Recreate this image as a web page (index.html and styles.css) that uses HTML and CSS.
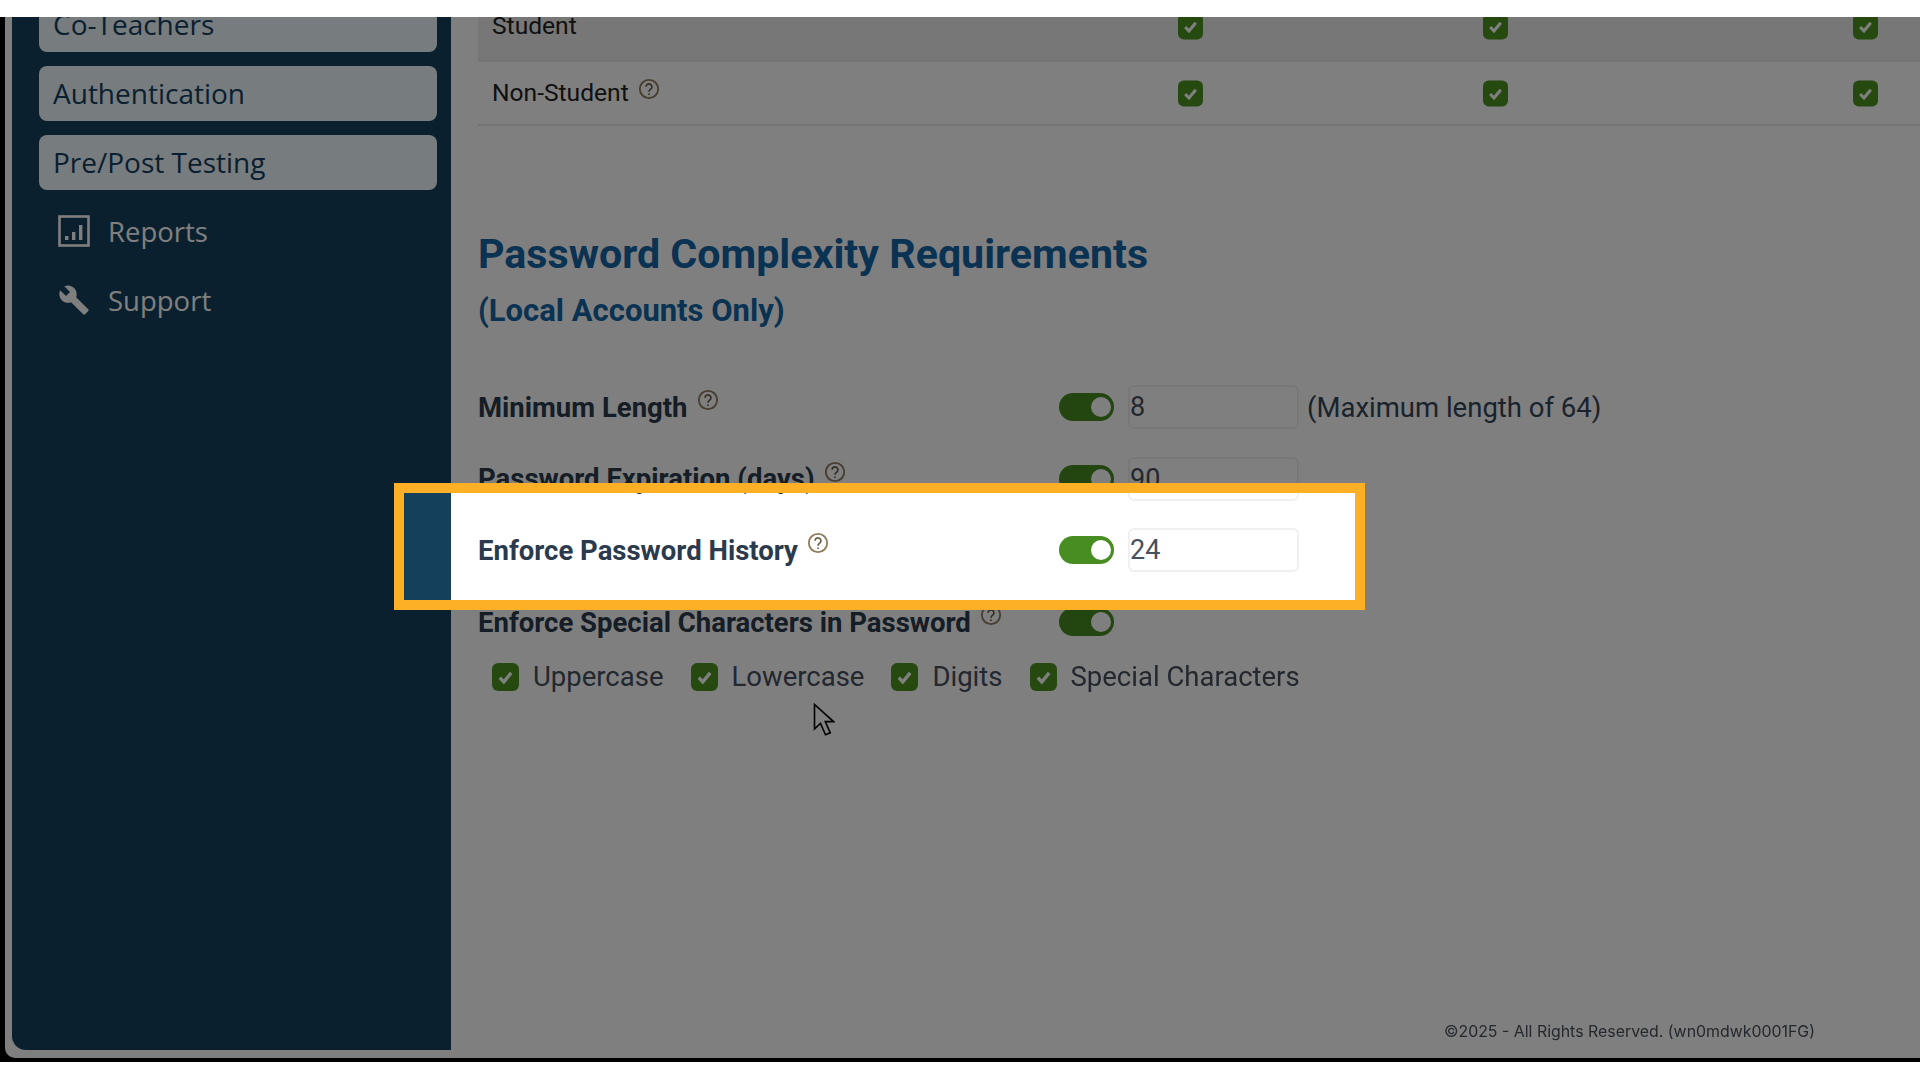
FILE: index.html
```html
<!DOCTYPE html>
<html lang="en">
<head>
<meta charset="utf-8">
<title>Password Complexity Requirements</title>
<link rel="stylesheet" href="styles.css">
</head>
<body>
<svg class="defs" width="0" height="0" aria-hidden="true">
  <symbol id="help" viewBox="0 0 24 24">
    <circle cx="12" cy="12" r="10" fill="none" stroke="#8d7d5e" stroke-width="2"/>
    <path d="M8.8 9.6a3.2 3.2 0 1 1 5 2.6c-1.2.8-1.8 1.4-1.8 2.8M12 17v1.6" fill="none" stroke="#6a5c42" stroke-width="1.8"/>
  </symbol>
  <symbol id="check" viewBox="0 0 26 27">
    <rect width="26" height="27" rx="6" fill="#4a931f"/>
    <path d="M7.5 14l3.9 4.2L18.5 9.5" fill="none" stroke="#fff" stroke-width="3.2"/>
  </symbol>
</svg>
<div class="stage">
  <div class="app">
    <aside class="sidebar">
      <nav class="nav">
        <a class="sub">Co-Teachers</a>
        <a class="sub">Authentication</a>
        <a class="sub">Pre/Post Testing</a>
        <a class="top">
          <svg class="top-icon" viewBox="0 0 32 32"><rect x="1.5" y="1.5" width="29" height="29" fill="none" stroke="#fff" stroke-width="2.6"/><path d="M7 21h3.4v4H7zM14 17h3.4v8H14zM21 10h3.4v15H21z" fill="#fff"/></svg>
          Reports
        </a>
        <a class="top">
          <svg class="top-icon" viewBox="0 0 24 24"><path d="M22.7 19l-9.1-9.1c.9-2.3.4-5-1.5-6.9-2-2-5-2.4-7.4-1.3L9 6 6 9 1.6 4.7C.4 7.1.9 10.1 2.9 12.1c1.9 1.9 4.6 2.4 6.9 1.5l9.1 9.1c.4.4 1 .4 1.4 0l2.3-2.3c.5-.4.5-1.1.1-1.4z" fill="#fff"/></svg>
          Support
        </a>
      </nav>
    </aside>
    <main class="main">
      <div class="table">
        <div class="t-row t-row-student">
          <span class="t-label">Student</span>
          <svg class="cb"><use href="#check"/></svg>
          <svg class="cb"><use href="#check"/></svg>
          <svg class="cb"><use href="#check"/></svg>
        </div>
        <div class="t-row">
          <span class="t-label">Non-Student <svg class="help help-small"><use href="#help"/></svg></span>
          <svg class="cb"><use href="#check"/></svg>
          <svg class="cb"><use href="#check"/></svg>
          <svg class="cb"><use href="#check"/></svg>
        </div>
      </div>
      <h2 class="title">Password Complexity Requirements</h2>
      <h3 class="subtitle">(Local Accounts Only)</h3>
      <div class="settings">
        <div class="setting">
          <span class="s-label">Minimum Length <svg class="help"><use href="#help"/></svg></span>
          <span class="toggle"><i class="knob"></i></span>
          <div class="field">8</div>
          <span class="note">(Maximum length of 64)</span>
        </div>
        <div class="setting">
          <span class="s-label">Password Expiration (days) <svg class="help"><use href="#help"/></svg></span>
          <span class="toggle"><i class="knob"></i></span>
          <div class="field">90</div>
        </div>
        <div class="setting">
          <span class="s-label">Enforce Password History <svg class="help"><use href="#help"/></svg></span>
          <span class="toggle"><i class="knob"></i></span>
          <div class="field">24</div>
        </div>
        <div class="setting">
          <span class="s-label">Enforce Special Characters in Password <svg class="help"><use href="#help"/></svg></span>
          <span class="toggle"><i class="knob"></i></span>
        </div>
      </div>
      <div class="options">
        <label class="option"><svg class="cb cb-large"><use href="#check"/></svg>Uppercase</label>
        <label class="option"><svg class="cb cb-large"><use href="#check"/></svg>Lowercase</label>
        <label class="option"><svg class="cb cb-large"><use href="#check"/></svg>Digits</label>
        <label class="option"><svg class="cb cb-large"><use href="#check"/></svg>Special Characters</label>
      </div>
      <footer class="footer">©2025 - All Rights Reserved. (wn0mdwk0001FG)</footer>
    </main>
    <svg class="cursor" viewBox="0 0 22 33"><path d="M1.5 1.5V26l6-5.6 5 11.4 4.8-2-5-11.2h8.2z" fill="#fff" stroke="#000" stroke-width="1.6"/></svg>
  </div>
  <div class="spotlight"></div>
</div>
</body>
</html>
```
FILE: styles.css
```css
* { box-sizing: border-box; }
html, body { margin: 0; background: #fff; }
body { font-family: Roboto, "Liberation Sans", sans-serif; height: 1080px; overflow: hidden; padding-top: 17px; }
.defs { position: absolute; }

.stage {
  position: relative;
  height: 1045px;
  overflow: hidden;
  background: #000;
  padding: 0 0 4px 5px;
}
.app {
  position: relative;
  display: flex;
  height: 100%;
  background: #fff;
  border-bottom-left-radius: 10px;
  filter: blur(0.7px);
}

.sidebar {
  flex: 0 0 439px;
  margin: 0 0 8px 7px;
  background: #14405c;
  border-bottom-left-radius: 14px;
  overflow: hidden;
}
.nav {
  display: flex;
  flex-direction: column;
  gap: 14px;
  margin-top: -20px;
  padding: 0 14px 0 27px;
  font-family: "Open Sans", sans-serif;
  font-size: 28px;
}
.nav a { display: flex; align-items: center; height: 55px; padding-bottom: 1px; }
.sub {
  background: #eff8fe;
  border-radius: 8px;
  padding-left: 14px;
  color: #143f5e;
}
.top { color: #fff; padding-left: 19px; gap: 18px; font-weight: 500; font-size: 27.5px; }
.top-icon { width: 32px; height: 32px; flex: none; }

.main {
  flex: 1;
  min-width: 0;
  display: flex;
  flex-direction: column;
  padding-left: 27px;
  color: #2b3a4c;
}
.table { margin-top: -24px; }
.t-row {
  display: grid;
  grid-template-columns: 700px 305px 370px 1fr;
  align-items: center;
  height: 64px;
  border-bottom: 2px solid #e8e8e8;
  color: #222;
  font-size: 24.6px;
}
.t-row-student { height: 69px; background: #efefef; }
.t-label { display: flex; align-items: center; padding: 0 0 2px 14px; gap: 9px; }
.cb { width: 25px; height: 27px; display: block; }
.cb-large { width: 27px; height: 28px; flex: none; }

.title { margin: 105px 0 0; font-size: 41.2px; line-height: 46px; font-weight: 700; color: #1565a5; }
.subtitle { margin: 17px 0 0; font-size: 31px; line-height: 34px; font-weight: 700; color: #1565a5; }

.settings { display: flex; flex-direction: column; gap: 27.7px; margin-top: 57px; }
.setting { display: flex; align-items: center; height: 44px; }
.s-label { flex: 0 0 581px; display: flex; align-items: center; gap: 9px; font-size: 27.5px; font-weight: 700; color: #2b3a4c; }
.help { width: 22px; height: 22px; margin-bottom: 14px; flex: none; }
.help-small { margin-bottom: 6px; }
.toggle {
  flex: none;
  display: flex;
  justify-content: flex-end;
  align-items: center;
  width: 55px;
  height: 28px;
  padding-right: 3px;
  border-radius: 14px;
  background: #478d22;
}
.knob { width: 20px; height: 20px; border-radius: 50%; background: #fff; }
.field {
  flex: none;
  width: 171px;
  height: 44px;
  margin-left: 14px;
  border: 2px solid #f0f0f0;
  border-radius: 6px;
  background: #fff;
  font-size: 27px;
  line-height: 40px;
  color: #46505e;
}
.note { margin-left: 8px; font-size: 27.5px; color: #34465a; }

.options { display: flex; gap: 27px; margin: 16px 0 0 14px; }
.option { display: flex; align-items: center; gap: 14px; font-size: 27.5px; color: #46505e; }

.footer {
  margin-top: auto;
  padding: 0 105px 15px 0;
  text-align: right;
  font-family: Inter, sans-serif;
  font-size: 15.9px;
  line-height: 22px;
  color: #4a5058;
}

.cursor { position: absolute; left: 808px; top: 686px; width: 22px; height: 33px; }

.spotlight {
  position: absolute;
  left: 394px;
  top: 466px;
  width: 971px;
  height: 127px;
  border: 10px solid #fdaf26;
  box-shadow: 0 0 0 2400px rgba(0, 0, 0, 0.5);
}
```
